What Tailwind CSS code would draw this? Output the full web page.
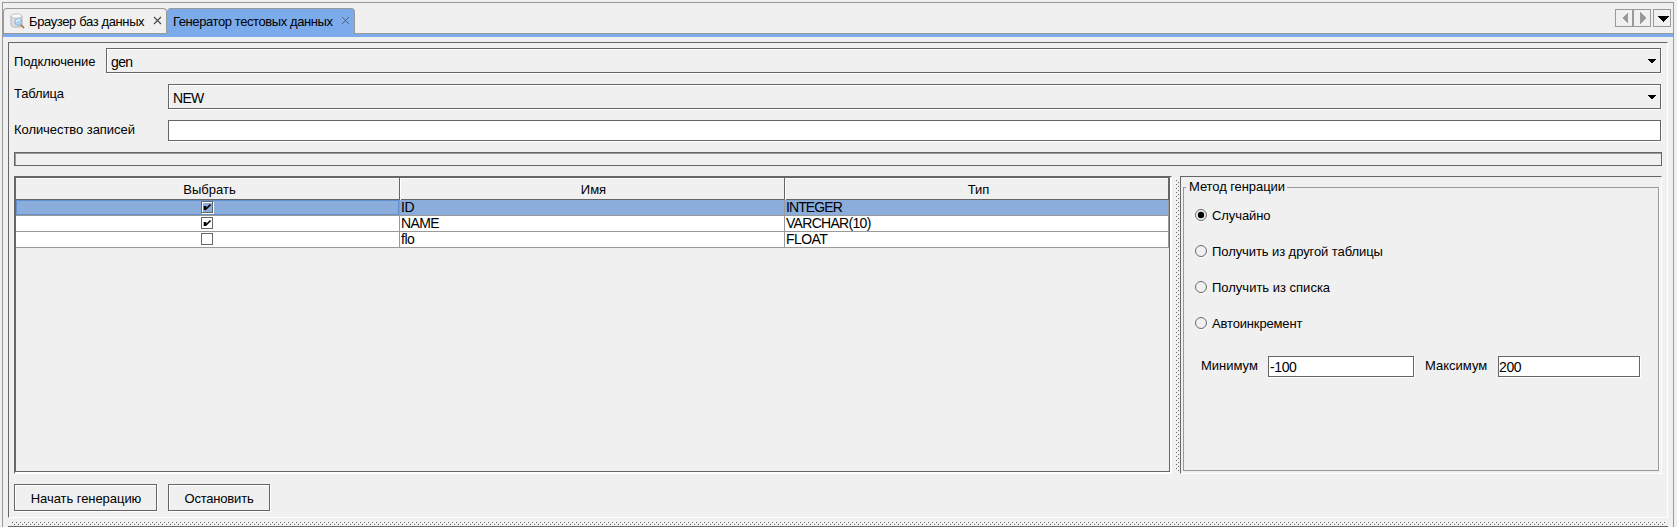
<!DOCTYPE html>
<html lang="ru">
<head>
<meta charset="utf-8">
<title>Генератор тестовых данных</title>
<script src="https://cdn.jsdelivr.net/npm/@tailwindcss/browser@4"></script>
</head>
<body class="h-[527px] w-[1677px] overflow-hidden bg-[#f0f0f0] font-['Liberation_Sans',sans-serif] text-[13px] leading-4 text-black whitespace-nowrap">
<div class="ml-[2px] mt-[2px] flex h-[525px] w-[1672px] flex-col border border-b-0 border-[#999]">

  <!-- Tab strip -->
  <div class="flex h-[31px] justify-between">
    <div class="flex pt-[5px]">
      <div class="flex h-[25px] w-[164px] items-center rounded-t-[4px] border border-b-0 border-[#999] pl-[6px]">
        <svg width="15" height="16" viewBox="0 0 15 16" class="mr-[4px]">
          <path d="M1 3v9c0 3 11 3 11 0V3z" fill="#dedede" stroke="#a8a8a8" stroke-width=".8"/>
          <ellipse cx="6.5" cy="3" rx="5.5" ry="2.2" fill="#fafafa" stroke="#b4b4b4" stroke-width=".8"/>
          <circle cx="8.3" cy="9" r="3.5" fill="#b5d3f0" stroke="#86b4e2" stroke-width="1"/>
          <path d="M6.3 9a2.5 2.5 0 0 1 3.7-2" fill="none" stroke="#e9f4fd" stroke-width="1.3"/>
          <path d="M11.3 12.3l2.2 2.2" stroke="#bd7c42" stroke-width="1.8" stroke-linecap="round"/>
        </svg>
        <span class="w-[124px] pt-[1px] tracking-[-0.38px]">Браузер баз данных</span>
        <svg width="9" height="9" viewBox="0 0 9 9" class="-mt-[2px] shrink-0"><path d="M1 1l7 7M8 1l-7 7" stroke="#444" stroke-width="1.1" fill="none"/></svg>
      </div>
      <div class="flex h-[26px] w-[188px] items-center rounded-t-[4px] border border-b-0 border-[#999] border-l-[#7cabec] bg-[#7cabec] pl-[5px]">
        <span class="w-[168px] pt-[1px] tracking-[-0.41px]">Генератор тестовых данных</span>
        <svg width="9" height="9" viewBox="0 0 9 9" class="-mt-[2px] shrink-0"><path d="M1 1l7 7M8 1l-7 7" stroke="#4a6488" fill="none"/></svg>
      </div>
    </div>
    <div class="flex pt-[6px] pr-[2px]">
      <div class="flex h-[18px] w-[18px] items-center justify-center border border-[#999]"><svg width="6" height="12" viewBox="0 0 6 12" class="ml-[2px]" shape-rendering="crispEdges"><path d="M6 0v12L0 6z" fill="#999"/></svg></div>
      <div class="flex h-[18px] w-[18px] items-center justify-center border border-[#999]"><svg width="6" height="12" viewBox="0 0 6 12" class="ml-[2px]" shape-rendering="crispEdges"><path d="M0 0v12L6 6z" fill="#999"/></svg></div>
      <div class="ml-[2px] flex h-[18px] w-[18px] items-center justify-center border border-[#999]"><svg width="12" height="6" viewBox="0 0 12 6" class="ml-[1px] mt-[2px]" shape-rendering="crispEdges"><path d="M0 0h12L6 6z"/></svg></div>
    </div>
  </div>
  <div class="-mt-px flex h-[4px] shrink-0 flex-col">
    <div class="flex h-px"><div class="w-[164px] bg-[#999]"></div><div class="w-[187px] bg-[#7cabec]"></div><div class="grow bg-[#999]"></div></div>
    <div class="h-[3px] bg-[#7cabec]"></div>
  </div>

  <!-- Main panel -->
  <div class="ml-[5px] mt-[5px] h-[476px] w-[1660px] shrink-0 border border-t-[#666] border-l-[#666] border-r-white border-b-white pl-[5px] pt-[5px]">
    <div class="flex h-[36px]">
      <div class="w-[92px] pt-[6px] tracking-[-0.1px]">Подключение</div>
      <div class="flex h-[25px] w-[1555px] items-center justify-between border border-[#666] pl-[4px] pr-[4px] text-[14px] shadow-[inset_1px_1px_0_#fff,1px_1px_0_#fff]"><span class="pt-[2px] tracking-[-0.6px]">gen</span><svg width="8" height="4" viewBox="0 0 8 4" shape-rendering="crispEdges"><path d="M0 0h8v1H0zM1 1h6v1H1zM2 2h4v1H2zM3 3h2v1H3z"/></svg></div>
    </div>
    <div class="flex h-[36px]">
      <div class="w-[154px] pt-[2px] tracking-[-0.15px]">Таблица</div>
      <div class="flex h-[25px] w-[1493px] items-center justify-between border border-[#666] pl-[4px] pr-[4px] text-[14px] shadow-[inset_1px_1px_0_#fff,1px_1px_0_#fff]"><span class="pt-[2px] tracking-[-0.7px]">NEW</span><svg width="8" height="4" viewBox="0 0 8 4" shape-rendering="crispEdges"><path d="M0 0h8v1H0zM1 1h6v1H1zM2 2h4v1H2zM3 3h2v1H3z"/></svg></div>
    </div>
    <div class="flex h-[32px]">
      <div class="w-[154px] pt-[2px] tracking-[-0.06px]">Количество записей</div>
      <div class="h-[21px] w-[1493px] border border-[#666] bg-white shadow-[1px_1px_0_#fff]"></div>
    </div>
    <div class="h-[14px] w-[1648px] border border-[#666] shadow-[inset_1px_1px_0_#999]"></div>

    <div class="mt-[10px] flex h-[308px]">
      <!-- Column table -->
      <div class="h-[298px] w-[1158px] border border-t-[#666] border-l-[#666] border-r-white border-b-white">
      <div class="flex h-[295px] w-[1155px] flex-col border border-[#666] shadow-[1px_1px_0_#fff]">
        <div class="grid h-[22px] shrink-0 grid-cols-[384px_385px_384px] border-b border-[#666] text-center leading-[23px] shadow-[inset_0_1px_0_#fff]">
          <div class="border-r border-[#666] pl-[4px]">Выбрать</div>
          <div class="border-r border-[#666] pl-[3px] shadow-[inset_1px_1px_0_#fff]">Имя</div>
          <div class="border-r border-[#666] pl-[4px] shadow-[inset_1px_1px_0_#fff]">Тип</div>
        </div>
        <div class="text-[14px]">
            <div class="grid h-[16px] grid-cols-[384px_385px_384px] border-b border-[#999] bg-[#8aaddc] leading-[15px]">
              <div class="border-r border-[#999]"><div class="flex h-[15px] justify-center border border-[#6391cc] pr-[1px]"><div class="flex size-[12px] items-center justify-center border border-[#666] shadow-[inset_1px_1px_0_#fff,1px_1px_0_#fff]"><svg width="8" height="8" viewBox="0 0 8 8"><path d="M1.5 3v4M2.5 3v4M2.5 6.5L7.5 1.5" stroke="#000" stroke-width="1.6" fill="none"/></svg></div></div></div>
              <div class="border-r border-[#999] pl-px tracking-[-0.3px]">ID</div><div class="border-r border-[#999] pl-px tracking-[-0.9px]">INTEGER</div>
            </div>
            <div class="grid h-[16px] grid-cols-[384px_385px_384px] border-b border-[#999] bg-white leading-[15px]">
              <div class="flex justify-center border-r border-[#999] pr-[1px] pt-px"><div class="flex size-[12px] items-center justify-center border border-[#666]"><svg width="8" height="8" viewBox="0 0 8 8"><path d="M1.5 3v4M2.5 3v4M2.5 6.5L7.5 1.5" stroke="#000" stroke-width="1.6" fill="none"/></svg></div></div>
              <div class="border-r border-[#999] pl-px tracking-[-0.6px]">NAME</div><div class="border-r border-[#999] pl-px tracking-[-0.7px]">VARCHAR(10)</div>
            </div>
            <div class="grid h-[16px] grid-cols-[384px_385px_384px] border-b border-[#999] bg-white leading-[15px]">
              <div class="flex justify-center border-r border-[#999] pr-[1px] pt-px"><div class="size-[12px] border border-[#666]"></div></div>
              <div class="border-r border-[#999] pl-px tracking-[-0.5px]">flo</div><div class="border-r border-[#999] pl-px tracking-[-0.6px]">FLOAT</div>
            </div>
        </div>
      </div>
      </div>

      <!-- Vertical divider -->
      <svg width="8" height="298" class="shrink-0"><defs><pattern id="dots" width="4" height="4" patternUnits="userSpaceOnUse"><path d="M0 0h1v1H0zM2 2h1v1H2z" fill="#666"/><path d="M1 1h1v1H1zM3 3h1v1H3z" fill="#fff"/></pattern></defs><rect x="3" y="3" width="4" height="293" fill="url(#dots)"/></svg>

      <!-- Generation method -->
      <div class="h-[298px] w-[482px] border border-t-[#666] border-l-[#666] border-r-white border-b-white pl-[2px] pt-[3px]">
        <fieldset class="h-[291px] w-[476px] border border-[#999] pl-[11px] shadow-[1px_0_0_#fff]">
          <legend class="-ml-[9px] h-[14px] pl-[3px] pr-[2px] leading-[14px] tracking-[-0.08px]">Метод генрации</legend>
          <div class="mt-[13px] flex flex-col gap-[20px] tracking-[-0.08px]">
            <div class="flex h-4 items-center gap-[4px]"><svg width="13" height="13" viewBox="0 0 13 13"><circle cx="6.5" cy="6.5" r="6" stroke="#fff" fill="none"/><circle cx="6" cy="6" r="5.5" stroke="#666" fill="none"/><circle cx="6" cy="6" r="3.2"/></svg><span class="pt-px">Случайно</span></div>
            <div class="flex h-4 items-center gap-[4px]"><svg width="13" height="13" viewBox="0 0 13 13"><circle cx="6.5" cy="6.5" r="6" stroke="#fff" fill="none"/><circle cx="6" cy="6" r="5.5" stroke="#666" fill="none"/></svg><span class="pt-px">Получить из другой таблицы</span></div>
            <div class="flex h-4 items-center gap-[4px]"><svg width="13" height="13" viewBox="0 0 13 13"><circle cx="6.5" cy="6.5" r="6" stroke="#fff" fill="none"/><circle cx="6" cy="6" r="5.5" stroke="#666" fill="none"/></svg><span class="pt-px tracking-normal">Получить из списка</span></div>
            <div class="flex h-4 items-center gap-[4px]"><svg width="13" height="13" viewBox="0 0 13 13"><circle cx="6.5" cy="6.5" r="6" stroke="#fff" fill="none"/><circle cx="6" cy="6" r="5.5" stroke="#666" fill="none"/></svg><span class="pt-px tracking-[-0.15px]">Автоинкремент</span></div>
          </div>
          <div class="mt-[25px] flex h-[21px]">
            <span class="w-[73px] shrink-0 pl-[6px] pt-[2px]">Минимум</span>
            <div class="h-[21px] w-[146px] border border-[#666] bg-white pl-px pt-[2px] text-[14px] tracking-[-0.4px] shadow-[1px_1px_0_#fff]">-100</div>
            <span class="w-[84px] shrink-0 pl-[11px] pt-[2px]">Максимум</span>
            <div class="h-[21px] w-[142px] border border-[#666] bg-white pt-[2px] text-[14px] tracking-[-0.4px] shadow-[1px_1px_0_#fff]">200</div>
          </div>
        </fieldset>
      </div>
    </div>

    <!-- Actions -->
    <div class="flex gap-[11px]">
      <button class="h-[27px] w-[143px] border border-[#666] pl-px pt-[2px] tracking-[-0.05px] shadow-[inset_1px_1px_0_#fff,1px_1px_0_#fff]">Начать генерацию</button>
      <button class="h-[27px] w-[102px] border border-[#666] pt-[2px] tracking-[-0.2px] shadow-[inset_1px_1px_0_#fff,1px_1px_0_#fff]">Остановить</button>
    </div>
  </div>
  <svg width="1660" height="9" class="ml-[5px] shrink-0"><rect x="4" y="3" width="1653" height="4" fill="url(#dots)"/><path d="M0 8h1660v1H0z" fill="#666"/></svg>
</div>
</body>
</html>
